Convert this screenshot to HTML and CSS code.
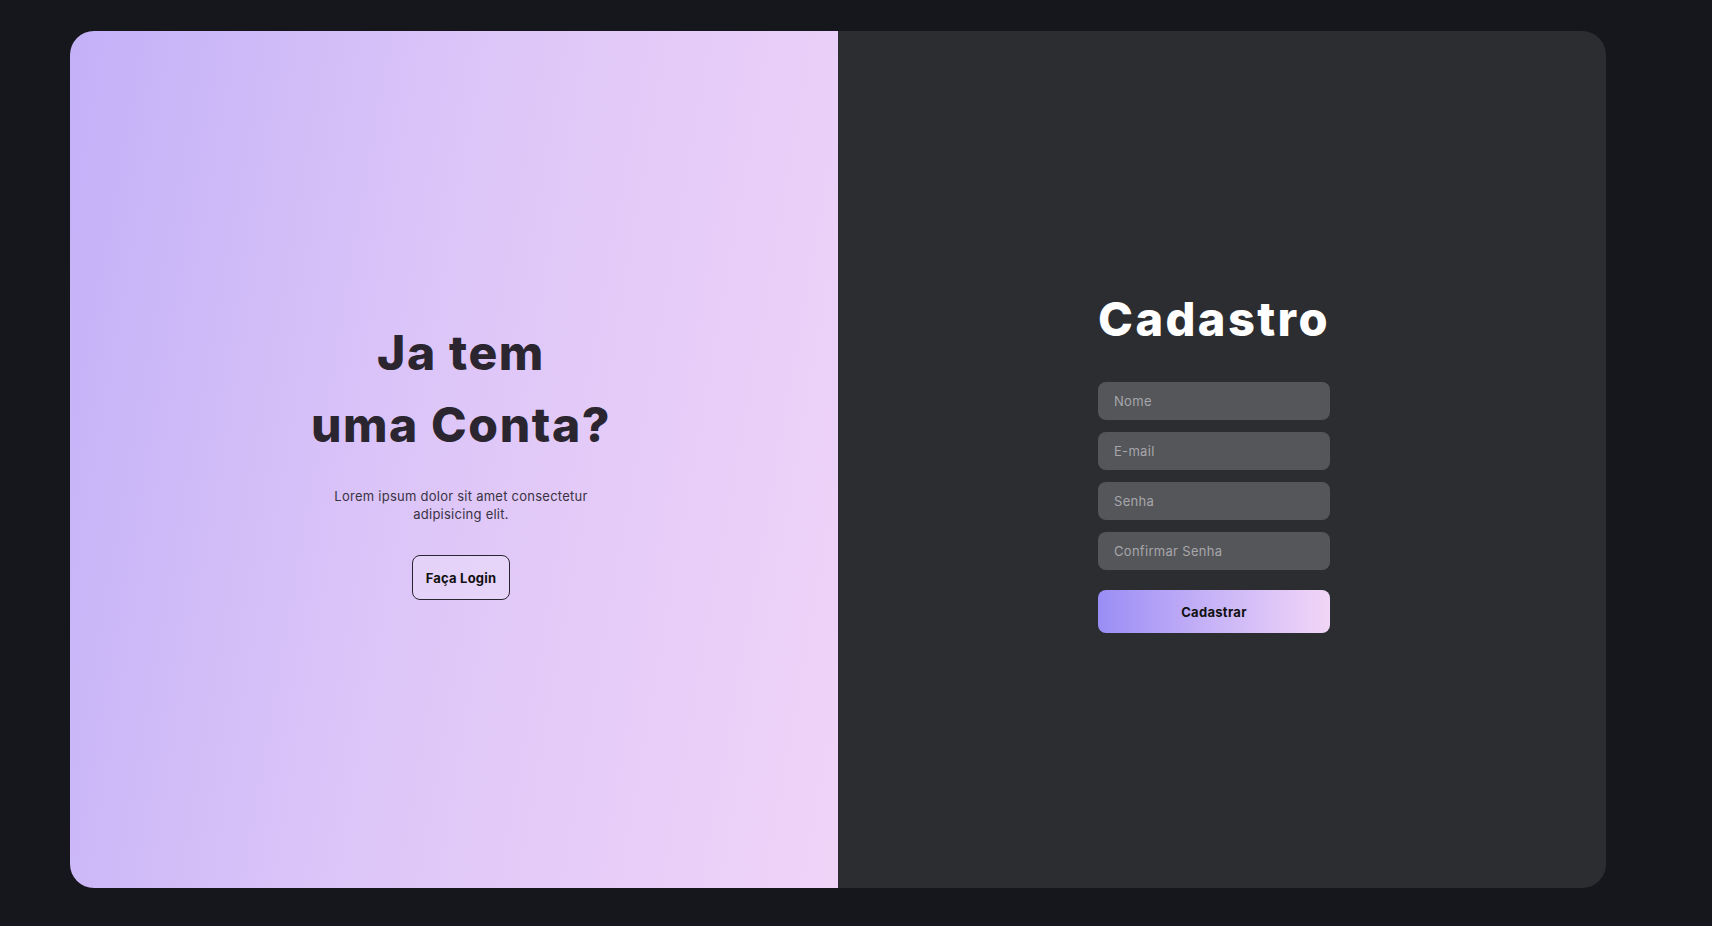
FILE: index.html
```html
<!DOCTYPE html>
<html lang="pt-BR">
<head>
<meta charset="utf-8">
<title>Cadastro</title>
<link rel="stylesheet" href="styles.css">
</head>
<body>
<main class="card">
  <section class="panel panel-left">
    <div class="welcome">
      <h1 class="welcome-title">Ja tem<br>uma Conta?</h1>
      <p class="welcome-text">Lorem ipsum dolor sit amet consectetur adipisicing elit.</p>
      <button class="btn-outline" type="button">Faça Login</button>
    </div>
  </section>
  <section class="panel panel-right">
    <form class="signup">
      <h2 class="signup-title">Cadastro</h2>
      <input class="field" type="text" placeholder="Nome">
      <input class="field" type="email" placeholder="E-mail">
      <input class="field" type="password" placeholder="Senha">
      <input class="field" type="password" placeholder="Confirmar Senha">
      <button class="btn-primary" type="button">Cadastrar</button>
    </form>
  </section>
</main>
</body>
</html>
```
FILE: styles.css
```css
* { box-sizing: border-box; }
html, body { height: 100%; }
body {
  margin: 0;
  background: #16171c;
  font-family: "Inter", "Noto Sans", sans-serif;
  padding: 31px 0 0 70px;
}
.card {
  width: 1536px;
  height: 857px;
  display: flex;
  border-radius: 24px;
  overflow: hidden;
}
.panel {
  flex: 1 1 50%;
  display: flex;
  align-items: center;
  justify-content: center;
}
.panel-left {
  background: linear-gradient(100deg, #c3b1f8 0%, #dcc5f8 45%, #f0d4f8 100%);
  padding-left: 14px;
  padding-bottom: 2px;
}
.panel-right {
  background: #2c2d31;
  padding-right: 16px;
  padding-top: 4px;
}
.welcome {
  display: flex;
  flex-direction: column;
  align-items: center;
  text-align: center;
}
.welcome-title {
  margin: 0;
  font-size: 48px;
  line-height: 72px;
  font-weight: 800;
  letter-spacing: 1.6px;
  color: #2b2530;
}
.welcome-text {
  margin: 27px 0 0;
  width: 270px;
  font-size: 13px;
  line-height: 17.5px;
  letter-spacing: 0.25px;
  color: #3a3342;
}
.btn-outline {
  margin-top: 32px;
  height: 45px;
  padding: 0 13px;
  border: 1px solid #2b2530;
  border-radius: 8px;
  background: rgba(255, 255, 255, 0.22);
  font-family: inherit;
  font-size: 13px;
  font-weight: 700;
  letter-spacing: 0.2px;
  color: #111;
}
.signup {
  width: 232px;
  display: flex;
  flex-direction: column;
  align-items: stretch;
}
.signup-title {
  margin: 0 -10px 34px;
  text-align: center;
  font-size: 47px;
  line-height: 58px;
  font-weight: 800;
  letter-spacing: 2.4px;
  color: #ffffff;
}
.field {
  height: 38px;
  margin-bottom: 12px;
  padding: 0 16px;
  border: none;
  border-radius: 8px;
  background: #55565a;
  font-family: inherit;
  font-size: 13px;
  letter-spacing: 0.3px;
  color: #eee;
  outline: none;
}
.field::placeholder { color: #a6a6ab; }
.btn-primary {
  margin-top: 8px;
  height: 43px;
  border: none;
  border-radius: 8px;
  background: linear-gradient(90deg, #9a8df5 0%, #c8b4f7 50%, #f2d6f7 100%);
  font-family: inherit;
  font-size: 13px;
  font-weight: 700;
  letter-spacing: 0.3px;
  color: #111;
}
```
